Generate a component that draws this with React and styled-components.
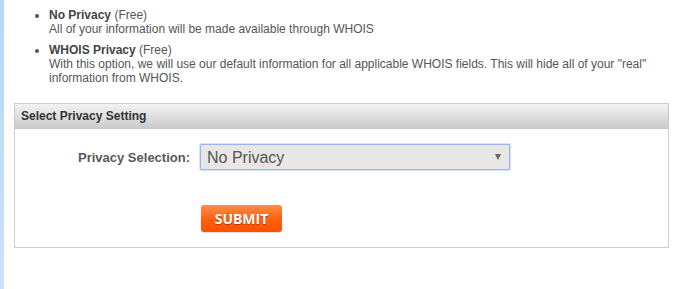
import React from "react";
import styled, { createGlobalStyle } from "styled-components";

const GlobalStyle = createGlobalStyle`
    html, body {
        margin: 0;
        padding: 0;
        background-color: #FFFFFF;
        font-family: "Liberation Sans", Arial, sans-serif;
    }
`;

const Page = styled.div`
    display: flex;
    min-height: 289px;
`;

const Strip = styled.div`
    width: 4px;
    flex-shrink: 0;
    background: linear-gradient(to bottom, #B8D6F8, #CCE2F8);
`;

const Content = styled.div`
    flex: 1;
    padding: 0 9px 0 10px;
`;

const OptionList = styled.ul`
    margin: 0 0 18px 0;
    padding: 8px 0 0 35px;
    color: #555555;
    font-size: 12px;
    line-height: 14px;

    li {
        margin-bottom: 7px;
    }

    li:last-child {
        margin-bottom: 0;
    }

    strong {
        color: #444444;
    }
`;

const Panel = styled.div`
    border: 1px solid #CCCCCC;
`;

const PanelHeader = styled.div`
    height: 24px;
    line-height: 24px;
    padding-left: 6px;
    font-size: 12px;
    font-weight: bold;
    color: #333333;
    background: linear-gradient(to bottom, #F2F2F2, #CBCBCB);
    border-bottom: 1px solid #C6C6C6;
`;

const PanelBody = styled.div`
    padding: 15px 0 15px 0;
`;

const FormRow = styled.div`
    display: flex;
    align-items: center;
    gap: 10px;
`;

const Label = styled.label`
    width: 175px;
    text-align: right;
    font-size: 13px;
    font-weight: bold;
    color: #595959;
`;

const SelectWrap = styled.div`
    position: relative;
    width: 310px;
    height: 26px;
`;

const Select = styled.select`
    appearance: none;
    width: 100%;
    height: 100%;
    box-sizing: border-box;
    padding: 0 0 0 6px;
    border: 1px solid #97B6EE;
    box-shadow: 0 0 0 1px #D5E2F8;
    border-radius: 1px;
    background-color: #E9E7E5;
    color: #555555;
    font-family: "Liberation Sans", Arial, sans-serif;
    font-size: 16px;
    outline: none;
`;

const Arrow = styled.span`
    position: absolute;
    right: 9px;
    top: 10px;
    width: 0;
    height: 0;
    border-left: 3px solid transparent;
    border-right: 3px solid transparent;
    border-top: 6px solid #666666;
    pointer-events: none;
`;

const ButtonRow = styled.div`
    padding: 35px 0 0 186px;
`;

const SubmitButton = styled.button`
    width: 81px;
    height: 27px;
    border: none;
    border-radius: 3px;
    background: linear-gradient(to bottom, #FF8D4A, #FF6212 50%, #FF4F00);
    box-shadow: 0 1px 1px rgba(0, 0, 0, 0.15);
    color: #FFFFFF;
    font-family: "Open Sans", "Liberation Sans", sans-serif;
    font-size: 14px;
    font-weight: bold;
    text-shadow: 0 1px 1px rgba(120, 30, 0, 0.6);
    cursor: pointer;
`;

export default function App() {
    return (
        <>
            <GlobalStyle />
            <Page>
                <Strip />
                <Content>
                    <OptionList>
                        <li>
                            <strong>No Privacy</strong> (Free)<br />
                            All of your information will be made available through WHOIS
                        </li>
                        <li>
                            <strong>WHOIS Privacy</strong> (Free)<br />
                            With this option, we will use our default information for all applicable WHOIS fields. This will hide all of your "real" information from WHOIS.
                        </li>
                    </OptionList>
                    <Panel>
                        <PanelHeader>Select Privacy Setting</PanelHeader>
                        <PanelBody>
                            <FormRow>
                                <Label htmlFor="privacy">Privacy Selection:</Label>
                                <SelectWrap>
                                    <Select id="privacy" defaultValue="none">
                                        <option value="none">No Privacy</option>
                                        <option value="whois">WHOIS Privacy</option>
                                    </Select>
                                    <Arrow />
                                </SelectWrap>
                            </FormRow>
                            <ButtonRow>
                                <SubmitButton>SUBMIT</SubmitButton>
                            </ButtonRow>
                        </PanelBody>
                    </Panel>
                </Content>
            </Page>
        </>
    );
}
